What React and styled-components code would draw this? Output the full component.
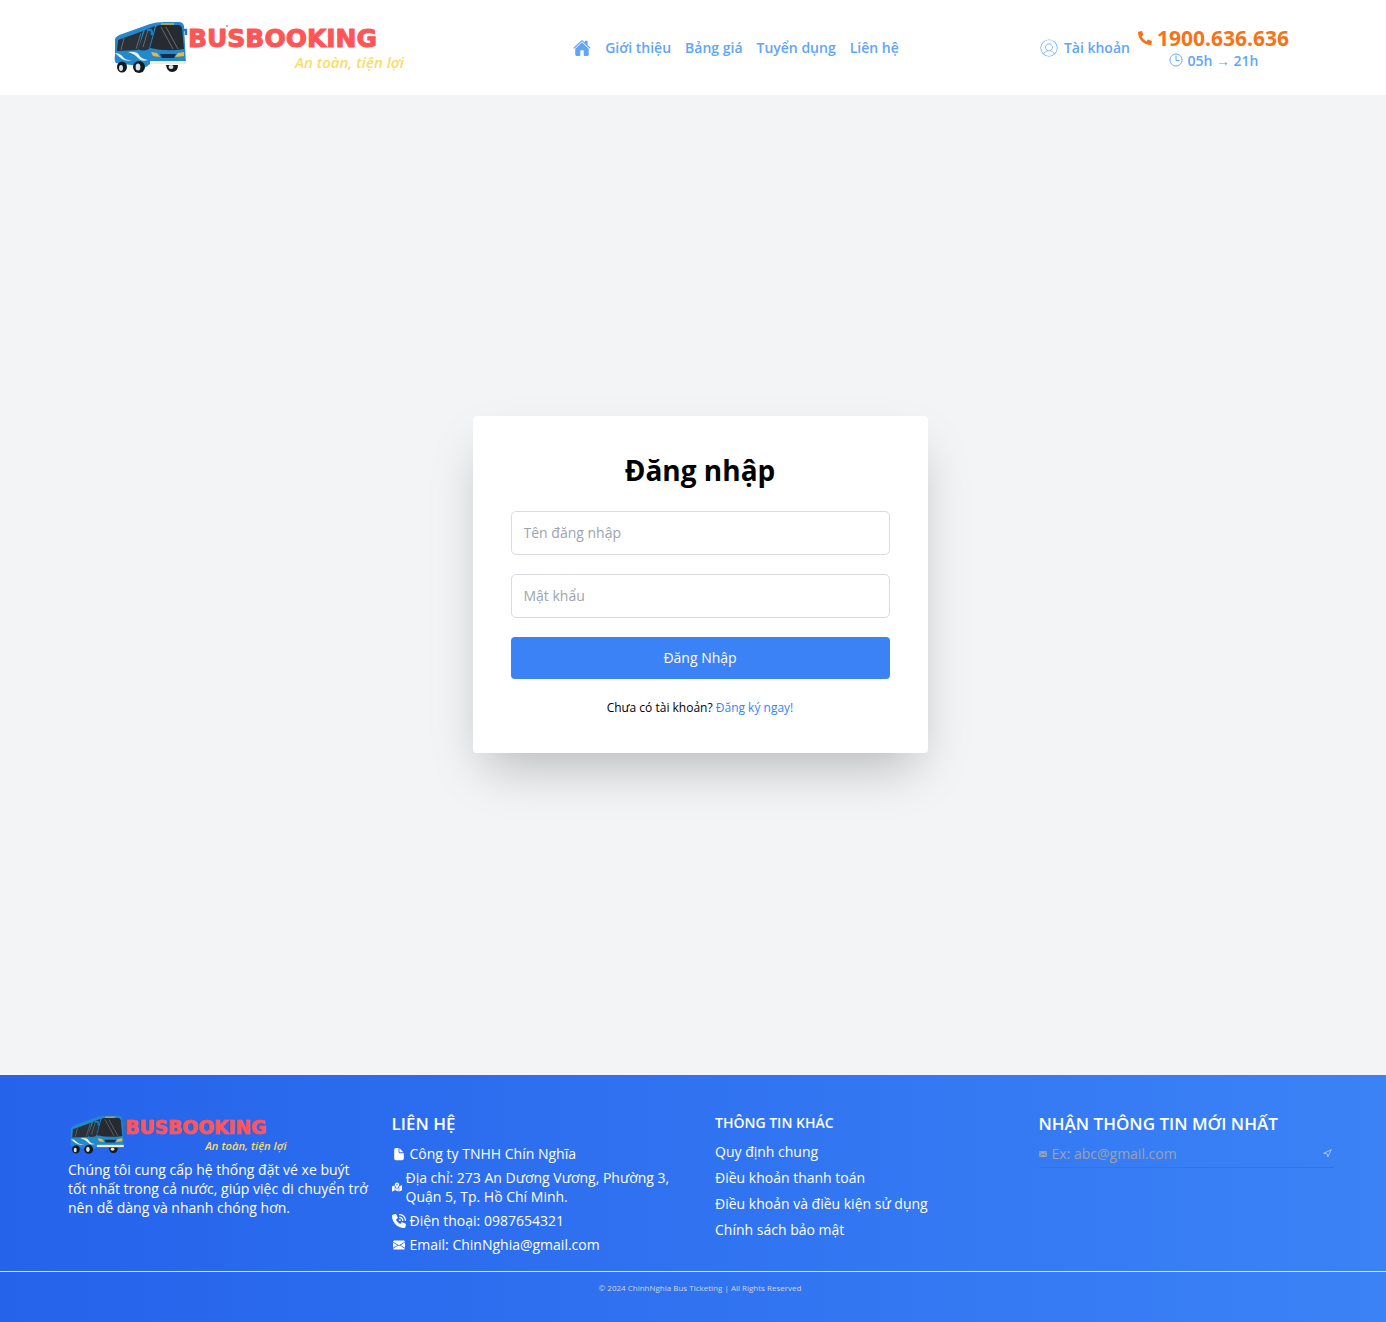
import React from "react";
import styled, { createGlobalStyle } from "styled-components";
import { FaPhoneAlt, FaMapMarkedAlt } from "react-icons/fa";
import { FaPhoneVolume } from "react-icons/fa6";
import { FiNavigation } from "react-icons/fi";
import { IoDocument, IoHome, IoTimeOutline } from "react-icons/io5";
import { BsEnvelopeFill } from "react-icons/bs";
import { PiUserCircleThin } from "react-icons/pi";

const Global = createGlobalStyle`
  *, *::before, *::after { box-sizing: border-box; }
  body { margin: 0; background: #f3f4f6; color: #000; font: 14px/19px "Open Sans", "Noto Sans", sans-serif; }
  h1, h2, p, ul { margin: 0; padding: 0; }
  ul { list-style: none; }
  a { color: inherit; text-decoration: none; }
  button, input { font: inherit; }
  svg { display: block; flex: none; }
`;

const Page = styled.div`
  min-height: 100vh;
  display: flex;
  flex-direction: column;
`;

const Header = styled.header`
  height: 95px;
  padding: 0 97px 0 114px;
  background: #fff;
  color: #60a5fa;
  font-weight: 600;
  display: flex;
  justify-content: space-between;
  align-items: center;
`;

const HeaderBrand = styled.div`
  padding-right: 28px;
`;

const Nav = styled.nav`
  display: flex;
  align-items: center;
  gap: 14px;
`;

const HeaderSide = styled.div`
  display: flex;
  align-items: center;
  gap: 8px;
`;

const Account = styled.a`
  display: flex;
  align-items: center;
  gap: 4px;
`;

const Hotline = styled.div`
  display: flex;
  flex-direction: column;
  align-items: center;
`;

const Phone = styled.a`
  display: flex;
  gap: 5px;
  align-items: center;
  color: #f97316;
  font-size: 21px;
  line-height: 25px;
  font-weight: 700;
`;

const Hours = styled.span`
  display: flex;
  align-items: center;
  gap: 3px;
`;

const LogoLink = styled.a`
  display: block;
  width: ${(p) => p.$width}px;
  svg { width: 100%; height: auto; }
`;

const Main = styled.main`
  flex: 1;
  display: flex;
  align-items: center;
  justify-content: center;
  padding: 0 0 2px 14px;
`;

const Card = styled.form`
  width: 100%;
  max-width: 455px;
  padding: 38px 38px 36px;
  background: #fff;
  border-radius: 4px;
  box-shadow: 0 24px 48px -12px rgba(0, 0, 0, 0.25);
  display: flex;
  flex-direction: column;
  gap: 19px;
`;

const Title = styled.h1`
  font-size: 28px;
  line-height: 32px;
  margin-bottom: 6px;
  font-weight: 700;
  text-align: center;
`;

const Field = styled.input`
  width: 100%;
  height: 44px;
  padding: 0 12px;
  border: 1px solid #d9dce1;
  border-radius: 5px;
  background: #fff;
  &::placeholder { color: #9ca3af; opacity: 1; }
`;

const Submit = styled.button`
  height: 42px;
  border: 0;
  border-radius: 4px;
  background: #3b82f6;
  color: #fff;
  cursor: pointer;
`;

const Note = styled.p`
  font-size: 12px;
  text-align: center;
  a { color: #3b82f6; }
`;

const Footer = styled.footer`
  background: linear-gradient(to right, #2563eb, #3b82f6);
  color: #fff;
`;

const Columns = styled.div`
  display: grid;
  grid-template-columns: repeat(4, minmax(0, 1fr));
  gap: 14px;
  padding: 38px 38px 17px 68px;
`;

const FooterBrand = styled.div`
  padding: 2px 0 5px 2px;
`;

const Heading = styled.h2`
  font-size: ${(p) => (p.$small ? 14 : 17)}px;
  line-height: ${(p) => (p.$small ? 19 : 22)}px;
  margin-bottom: ${(p) => (p.$small ? 10 : 9)}px;
  font-weight: 600;
`;

const Contacts = styled.ul`
  display: flex;
  flex-direction: column;
  gap: 5px;
`;

const Contact = styled.li`
  display: flex;
  align-items: center;
  gap: 4px;
`;

const ContactIcon = styled.span`
  flex: none;
  width: ${(p) => (p.$narrow ? 10 : 14)}px;
  display: flex;
  justify-content: center;
`;

const Links = styled.ul`
  display: flex;
  flex-direction: column;
  gap: 7px;
`;

const Subscribe = styled.form`
  display: flex;
  align-items: center;
  gap: 5px;
  margin-right: 14px;
  padding-bottom: 4px;
  border-bottom: 1px solid #4f70b0;
  color: #9ca3af;
`;

const EmailField = styled.input`
  flex: 1;
  min-width: 0;
  padding: 0;
  border: 0;
  background: transparent;
  color: #fff;
  &::placeholder { color: #9ca3af; opacity: 1; }
`;

const Send = styled.button`
  display: flex;
  padding: 0 2px;
  border: 0;
  background: none;
  color: #bfdbfe;
  cursor: pointer;
`;

const Copyright = styled.p`
  height: 51px;
  padding: 6px 0 0 14px;
  border-top: 1px solid #e5e7eb;
  color: #d1d5db;
  font-size: 8px;
  text-align: center;
`;

function Logo({ width }) {
  return (
    <LogoLink href="#" $width={width} aria-label="Busbooking">
      <svg viewBox="0 0 292 54">
        <path d="M1 18 Q2 15 8 13 L36 3 Q42 1 50 1 H65 Q69 1 70 5 L72 43 H36 L32 46 L2 42 Q0 40 1 34 Z" fill="#2389cf" />
        <path d="M4 19 L29 10 L24 29 L3 30 Z" fill="#2a3138" />
        <path d="M31 9 L41 5 L35 28 Q28 31 24 28 Z" fill="#2a3138" />
        <path d="M42 6 Q43 4 47 4 H65 Q67 4 68 7 L70 28 Q53 31 36 27 Z" fill="#272b2f" />
        <path d="M47 2 H60 V4 H47 Z" fill="#b3a34d" />
        <path d="M10 17 L7 29 M27 12 L22 28 M34 9 L29 26 M47 6 L59 28 M52 6 L64 28" stroke="#656b70" strokeWidth="1" fill="none" />
        <path d="M33 9 H37 Q38 9 38 14 M69 9 H72 V14" stroke="#147fc7" strokeWidth="2.4" fill="none" />
        <path d="M14 31 Q23 30 25 34 T34 39 Q27 41 24 37 T14 31 Z M1 32 Q6 32 9 36 T20 39 Q12 41 8 38 T1 32 Z" fill="#e9f2df" />
        <path d="M37 31 L43 32 L46 36 L39 35 Z M61 36 L64 32 L70 31 V35 Z" fill="#f7b52b" />
        <path d="M46 33 H62 L60 37 H48 Z" fill="#172e40" />
        <path d="M36 40 H72 V43 H36 Z" fill="#f4edc7" />
        <ellipse cx="8" cy="46" rx="5" ry="5.5" fill="#101a22" />
        <ellipse cx="25" cy="46" rx="6" ry="6" fill="#101a22" />
        <path d="M52 44 H64 Q64 51 58 51 Q53 51 52 44Z" fill="#101a22" />
        <ellipse cx="7" cy="47" rx="2" ry="3" fill="#dde4e5" />
        <ellipse cx="24" cy="46" rx="2.4" ry="3.5" fill="#dde4e5" />
        <ellipse cx="57" cy="46" rx="2.5" ry="2" fill="#dde4e5" />
        <circle cx="113" cy="5" r="0.7" fill="#444" />
        <text x="74" y="26" fill="#ff5557" stroke="#ff5557" strokeWidth="1" fontFamily="DejaVu Sans, sans-serif" fontWeight="700" fontSize="25">BUSBOOKING</text>
        <text x="290" y="47" textAnchor="end" fill="#f9dc64" fontFamily="Open Sans, sans-serif" fontStyle="italic" fontWeight="600" fontSize="15">An toàn, tiện lợi</text>
      </svg>
    </LogoLink>
  );
}

export default function App() {
  return (
    <Page>
      <Global />
      <Header>
        <HeaderBrand><Logo width={292} /></HeaderBrand>
        <Nav>
          <a href="#" aria-label="Trang chủ"><IoHome size={18} /></a>
          <a href="#">Giới thiệu</a>
          <a href="#">Bảng giá</a>
          <a href="#">Tuyển dụng</a>
          <a href="#">Liên hệ</a>
        </Nav>
        <HeaderSide>
          <Account href="#"><PiUserCircleThin size={22} />Tài khoản</Account>
          <Hotline>
            <Phone href="tel:1900636636"><FaPhoneAlt size={14} />1900.636.636</Phone>
            <Hours><IoTimeOutline size={16} />05h → 21h</Hours>
          </Hotline>
        </HeaderSide>
      </Header>
      <Main>
        <Card>
          <Title>Đăng nhập</Title>
          <Field aria-label="Tên đăng nhập" placeholder="Tên đăng nhập" />
          <Field type="password" aria-label="Mật khẩu" placeholder="Mật khẩu" />
          <Submit type="button">Đăng Nhập</Submit>
          <Note>Chưa có tài khoản? <a href="#">Đăng ký ngay!</a></Note>
        </Card>
      </Main>
      <Footer>
        <Columns>
          <section>
            <FooterBrand><Logo width={218} /></FooterBrand>
            <p>
              Chúng tôi cung cấp hệ thống đặt vé xe buýt<br />
              tốt nhất trong cả nước, giúp việc di chuyển trở<br />
              nên dễ dàng và nhanh chóng hơn.
            </p>
          </section>
          <section>
            <Heading>LIÊN HỆ</Heading>
            <Contacts>
              <Contact><ContactIcon><IoDocument size={14} /></ContactIcon>Công ty TNHH Chín Nghĩa</Contact>
              <Contact><ContactIcon $narrow><FaMapMarkedAlt size={10} /></ContactIcon><span>Địa chỉ: 273 An Dương Vương, Phường 3, Quận 5, Tp. Hồ Chí Minh.</span></Contact>
              <Contact><ContactIcon><FaPhoneVolume size={14} /></ContactIcon>Điện thoại: 0987654321</Contact>
              <Contact><ContactIcon><BsEnvelopeFill size={12} /></ContactIcon>Email: ChinNghia@gmail.com</Contact>
            </Contacts>
          </section>
          <section>
            <Heading $small>THÔNG TIN KHÁC</Heading>
            <Links>
              <li><a href="#">Quy định chung</a></li>
              <li><a href="#">Điều khoản thanh toán</a></li>
              <li><a href="#">Điều khoản và điều kiện sử dụng</a></li>
              <li><a href="#">Chính sách bảo mật</a></li>
            </Links>
          </section>
          <section>
            <Heading>NHẬN THÔNG TIN MỚI NHẤT</Heading>
            <Subscribe>
              <BsEnvelopeFill size={8} />
              <EmailField type="email" aria-label="Email" placeholder="Ex: abc@gmail.com" />
              <Send type="button" aria-label="Gửi"><FiNavigation size={9} /></Send>
            </Subscribe>
          </section>
        </Columns>
        <Copyright>© 2024 ChinhNghia Bus Ticketing | All Rights Reserved</Copyright>
      </Footer>
    </Page>
  );
}
